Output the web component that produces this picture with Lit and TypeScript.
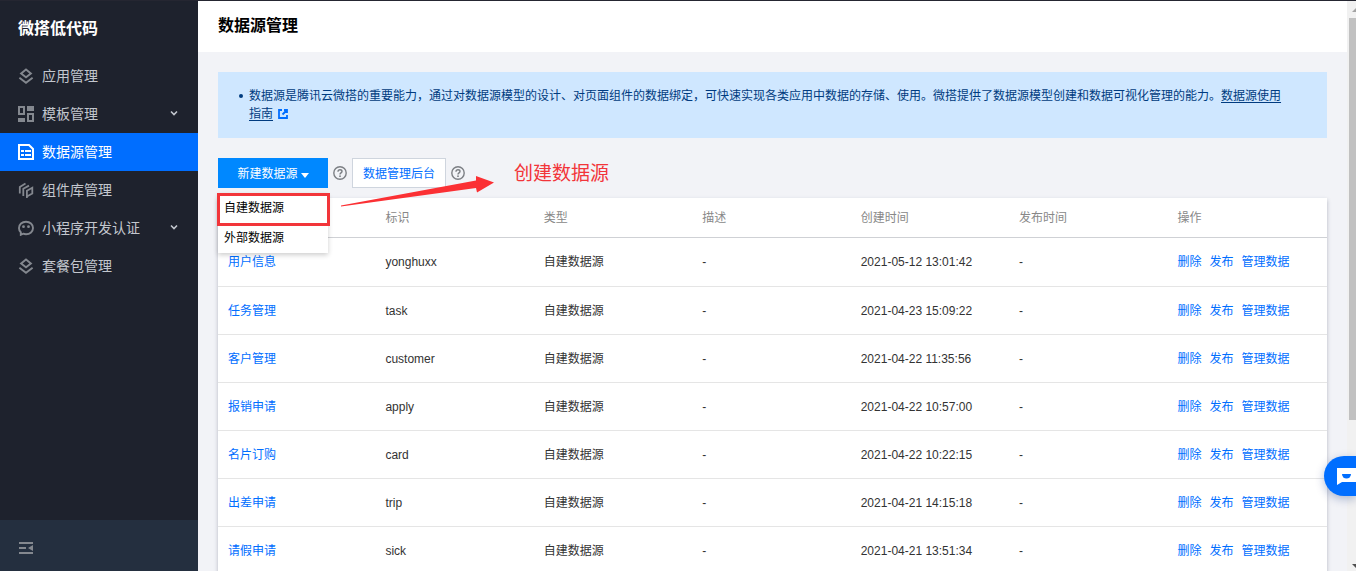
import { LitElement, html, css, svg } from "lit";
import { customElement, property } from "lit/decorators.js";

const icons: Record<string, unknown> = {
  layers: svg`<g fill="none" stroke="currentColor" stroke-width="1.900"><path d="M8 1.500 12.900 5.400 8 9.300 3.100 5.400Z"/><path d="M1.400 9.700 8 14.800l6.600-5.100"/></g>`,
  grid: svg`<g fill="none" stroke="currentColor" stroke-width="2"><path d="M1 1h5v7H1zM10 8h5v7h-5z"/></g><path fill="currentColor" d="M9 0h7v5H9zM0 12h7v4H0z"/>`,
  data: svg`<path fill="none" stroke="currentColor" stroke-width="2" d="M1 1h10l4 4v10H1z"/><path fill="currentColor" d="M3 6h3v2H3zM7 6h6v2H7zM3 10h3v2H3zM7 10h6v2H7z"/>`,
  parts: svg`<g fill="none" stroke="currentColor" stroke-width="1.800"><path d="M1.800 11.500V5L7.500 1.600M5.300 14V6.800L11 3.600"/><path d="M8.900 16V8.700l5.400-3v5.800L8.900 14.500"/></g>`,
  chat: svg`<path fill="none" stroke="currentColor" stroke-width="1.900" d="M2.800 14.800V12.300A6.800 6 0 0 1 1 8c0-3.600 3-6.200 7-6.200S15 4.400 15 8s-3 6.200-7 6.200c-1 0-2-.2-2.800-.5z"/><circle cx="5.500" cy="6.700" r="1.400" fill="currentColor"/><circle cx="10.500" cy="6.700" r="1.400" fill="currentColor"/>`,
  fold: svg`<path fill="currentColor" d="M1 2h14v2H1zM1 7h7v2H1zM1 12h14v2H1zM15 5v6l-5-3z"/>`,
};

const menu = [
  { icon: "layers", text: "应用管理" },
  { icon: "grid", text: "模板管理", more: true },
  { icon: "data", text: "数据源管理", active: true },
  { icon: "parts", text: "组件库管理" },
  { icon: "chat", text: "小程序开发认证", more: true },
  { icon: "layers", text: "套餐包管理" },
];

const columns = ["", "标识", "类型", "描述", "创建时间", "发布时间", "操作"];

const rows = [
  ["用户信息", "yonghuxx", "2021-05-12 13:01:42"],
  ["任务管理", "task", "2021-04-23 15:09:22"],
  ["客户管理", "customer", "2021-04-22 11:35:56"],
  ["报销申请", "apply", "2021-04-22 10:57:00"],
  ["名片订购", "card", "2021-04-22 10:22:15"],
  ["出差申请", "trip", "2021-04-21 14:15:18"],
  ["请假申请", "sick", "2021-04-21 13:51:34"],
];

@customElement("side-nav")
class SideNav extends LitElement {
  static styles = css`
    :host { display: flex; flex-direction: column; width: 198px; flex: none; background: #1e222d; color: #c3c7ce; font-size: 14px; }
    .brand { margin: 0; padding: 16px 18px; line-height: 24px; font-size: 16px; font-weight: 700; color: #fff; }
    .list { list-style: none; margin: 0; padding: 0; flex: 1; }
    .item { display: flex; align-items: center; height: 38px; padding: 0 18px; color: inherit; text-decoration: none; }
    .active { background: #006eff; color: #fff; }
    .icon { width: 16px; height: 16px; margin-right: 8px; color: #84888f; flex: none; }
    .active .icon { color: #fff; }
    .text { flex: 1; }
    .more { width: 12px; height: 12px; }
    .foot { display: flex; align-items: center; height: 51px; padding: 4px 18px 0; box-sizing: border-box; background: #242f3f; }
    .fold { display: flex; border: 0; padding: 0; background: none; }
  `;
  render() {
    return html`
      <h1 class="brand">微搭低代码</h1>
      <ul class="list">
        ${menu.map((m) => html`<li><a class="item ${m.active ? "active" : ""}" href="#">
          <svg class="icon" viewBox="0 0 16 16">${icons[m.icon]}</svg>
          <span class="text">${m.text}</span>
          ${m.more ? html`<svg class="more" viewBox="0 0 12 12"><path d="M3 3.500l3 3 3-3" fill="none" stroke="currentColor" stroke-width="1.600"/></svg>` : ""}
        </a></li>`)}
      </ul>
      <div class="foot"><button class="fold" aria-label="收起"><svg class="icon" viewBox="0 0 16 16">${icons.fold}</svg></button></div>`;
  }
}

@customElement("help-tip")
class HelpTip extends LitElement {
  static styles = css`
    :host { display: flex; }
    .btn { display: flex; padding: 0; border: 0; background: none; }
    .mark { width: 14px; height: 14px; color: #7c7f84; }
  `;
  render() {
    return html`<button class="btn" aria-label="帮助"><svg class="mark" viewBox="0 0 14 14">
      <g fill="none" stroke="currentColor" stroke-width="1.400"><circle cx="7" cy="7" r="6.200"/><path d="M5 5.800C5 4.500 5.800 3.800 7 3.800s2 .7 2 1.700c0 1.300-2 1.500-2 2.900"/></g>
      <circle cx="7" cy="10.200" r=".9" fill="currentColor"/></svg></button>`;
  }
}

@customElement("source-table")
class SourceTable extends LitElement {
  @property({ attribute: false }) rows: string[][] = [];
  static styles = css`
    :host { display: block; background: #fff; box-shadow: 0 2px 4px rgba(54, 58, 80, 0.32); }
    .table { width: 100%; table-layout: fixed; border-collapse: separate; border-spacing: 0; font-size: 12px; line-height: 18px; }
    .table th { height: 40px; box-sizing: border-box; padding: 0 9px; text-align: left; font-weight: 400; color: #888; border-bottom: 1px solid #cfd1d5; }
    .table td { height: 48px; box-sizing: border-box; padding: 0 9px; color: #333; border-bottom: 1px solid #e5e5e5; white-space: nowrap; }
    .table tr > :first-child { padding-left: 10px; }
    .table tbody tr:first-child td { height: 49px; }
    .link { color: #006eff; text-decoration: none; }
    .actions { display: flex; gap: 8px; }
  `;
  render() {
    return html`<table class="table">
      <thead><tr>${columns.map((c) => html`<th scope="col">${c}</th>`)}</tr></thead>
      <tbody>${this.rows.map(([name, id, time]) => html`<tr>
        <td><a class="link" href="#">${name}</a></td>
        <td>${id}</td><td>自建数据源</td><td>-</td><td>${time}</td><td>-</td>
        <td><div class="actions"><a class="link" href="#">删除</a><a class="link" href="#">发布</a><a class="link" href="#">管理数据</a></div></td>
      </tr>`)}</tbody>
    </table>`;
  }
}

@customElement("app-root")
class AppRoot extends LitElement {
  static styles = css`
    :host { display: flex; height: 100vh; box-sizing: border-box; border-top: 1px solid #252631; overflow: hidden; position: relative; background: #f2f3f7;
      font-family: "Liberation Sans", "Noto Sans CJK SC", sans-serif; font-size: 12px; line-height: 18px; }
    .page { flex: 1; min-width: 0; overflow: hidden; }
    .title { margin: 0; padding: 13px 20px 14px; line-height: 24px; font-size: 16px; font-weight: 700; color: #000; background: #fff; }
    .body { padding: 20px; }
    .notice { padding: 15px 40px 15px 21px; background: #cfe7ff; color: #003b80; }
    .tips { margin: 0; padding: 0; list-style: none; }
    .tip { display: flex; gap: 6px; }
    .tip::before { content: ""; width: 4px; height: 4px; margin-top: 7px; border-radius: 50%; background: currentColor; flex: none; }
    .guide { color: inherit; text-underline-offset: 2px; }
    .out { width: 10px; height: 10px; margin-left: 5px; vertical-align: -1px; }
    .tools { display: flex; align-items: center; gap: 5px; margin: 20px 0 10px; }
    .drop { position: relative; }
    .btn { display: flex; align-items: center; justify-content: center; height: 30px; font: inherit; padding: 1px 10px 0; box-sizing: border-box; border: 1px solid #cfd5de; background: #fff; color: #006eff; }
    .primary { width: 110px; gap: 3px; border-color: #0088ff; background: #0088ff; color: #fff; }
    .caret { border: 4px solid transparent; border-top: 5px solid #fff; border-bottom: 0; margin-top: 4px; }
    .menu { position: absolute; z-index: 2; left: 0; top: 35px; width: 110px; margin: 0; padding: 0; list-style: none; background: #fff; box-shadow: 0 2px 5px rgba(0, 0, 0, 0.2); }
    .option { display: block; width: 100%; height: 30px; padding: 0 6px; border: 0; background: none; font: inherit; text-align: left; color: #000; }
    .frame { position: absolute; z-index: 3; left: -1px; top: 35px; width: 113px; height: 33px; box-sizing: border-box; border: 3px solid #f2353a; }
    .arrow { position: absolute; z-index: 3; left: 123px; top: 18px; width: 154px; height: 32px; }
    .remark { position: absolute; z-index: 3; left: 296px; top: 2px; font-size: 19px; line-height: 28px; white-space: nowrap; color: #f2353a; }
    .bar { width: 9px; flex: none; box-sizing: border-box; padding-left: 2px; background: #f1f1f1; display: flex; flex-direction: column; overflow: hidden; }
    .end { width: 14px; height: 17px; flex: none; color: #a3a3a3; }
    .down { color: #505050; }
    .track { flex: 1; }
    .thumb { height: 75%; background: #c1c1c1; }
    .service { position: absolute; right: 0; bottom: 75px; width: 32px; height: 40px; border: 0; padding: 0 0 0 12px; border-radius: 20px 0 0 20px; background: #006eff; box-shadow: 0 3px 10px rgba(0, 40, 120, 0.3); display: flex; align-items: center; overflow: hidden; }
    .bubble { width: 20px; height: 18px; flex: none; }
  `;
  render() {
    return html`
      <side-nav></side-nav>
      <main class="page">
        <h2 class="title">数据源管理</h2>
        <div class="body">
          <div class="notice"><ul class="tips"><li class="tip"><span>数据源是腾讯云微搭的重要能力，通过对数据源模型的设计、对页面组件的数据绑定，可快速实现各类应用中数据的存储、使用。微搭提供了数据源模型创建和数据可视化管理的能力。<a class="guide" href="#">数据源使用指南</a><svg class="out" viewBox="0 0 10 10"><path d="M4 1H1v8h8V6M6 1h3v3M9 1 4.500 5.500" fill="none" stroke="#006eff" stroke-width="1.800"/></svg></span></li></ul></div>
          <div class="tools">
            <div class="drop">
              <button class="btn primary">新建数据源<span class="caret"></span></button>
              <ul class="menu">
                <li><button class="option">自建数据源</button></li>
                <li><button class="option">外部数据源</button></li>
              </ul>
              <div class="frame"></div>
              <svg class="arrow" viewBox="0 0 154 32"><path fill="#fb3034" d="M0 29.500 135 4.500V0l18 6.500-17 10-1-4.500L0 30.500z"/></svg>
              <div class="remark">创建数据源</div>
            </div>
            <help-tip></help-tip>
            <button class="btn">数据管理后台</button>
            <help-tip></help-tip>
          </div>
          <source-table .rows=${rows}></source-table>
        </div>
      </main>
      <div class="bar">
        <svg class="end" viewBox="0 0 14 17"><path fill="currentColor" d="M3 11l4-4 4 4z"/></svg>
        <div class="track"><div class="thumb"></div></div>
        <svg class="end down" viewBox="0 0 14 17"><path fill="currentColor" d="M3 10h8l-4 4z"/></svg>
      </div>
      <button class="service" aria-label="在线客服"><svg class="bubble" viewBox="0 0 20 18"><path fill="#fff" d="M1 1h19v14H6l-5 3z"/><path fill="#006eff" d="M6 7h9a4.500 4.500 0 0 1-9 0z"/></svg></button>`;
  }
}
